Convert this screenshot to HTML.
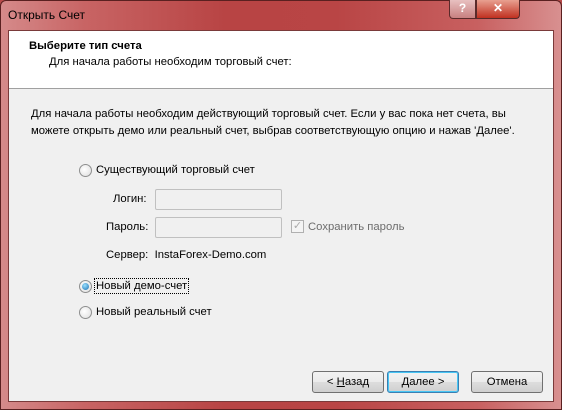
<!DOCTYPE html>
<html><head><meta charset="utf-8"><style>
*{margin:0;padding:0;box-sizing:border-box}
body{width:562px;height:410px;overflow:hidden;font-family:"Liberation Sans",sans-serif;font-size:11.3px;color:#000;background:#b84a4a}
.frame{position:absolute;left:0;top:0;width:562px;height:410px;border:1px solid #5a2020;border-radius:6px 6px 0 0;background:linear-gradient(90deg,#d58a8a 0%,#c86464 15%,#b84444 40%,#b94545 60%,#c86060 85%,#d89090 100%)}
.title{position:absolute;left:8px;top:8px;font-size:12px;color:#000}
.client{position:absolute;left:8px;top:30px;width:546px;height:372px;background:#f0f0f0;border:1px solid #7a3a3a}
.head{position:absolute;left:0;top:0;width:100%;height:58px;background:#fff;border-bottom:1px solid #a0a0a0}
.abs{position:absolute;white-space:nowrap}
.radio{position:absolute;width:13px;height:13px;border-radius:50%;border:1px solid #8e8f8f;background:radial-gradient(circle at 40% 40%,#fff,#ddd)}
.radio.on::after{content:"";position:absolute;left:2px;top:2px;width:7px;height:7px;border-radius:50%;background:radial-gradient(circle at 40% 35%,#9be0ff,#1a6fb0)}
.inp{position:absolute;width:127px;height:21px;border:1px solid #c0c0c0;border-radius:2px;background:#f0f0f0}
.btn{position:absolute;top:340px;width:72px;height:22px;border:1px solid #707070;border-radius:3px;background:linear-gradient(#f2f2f2 0%,#ebebeb 50%,#dddddd 51%,#cfcfcf 100%);text-align:center;line-height:20px}
.btn.def{border-color:#3c7fb1;box-shadow:inset 0 0 0 1px #48c6f4}
.tb{position:absolute;top:0;height:19px;border:1px solid #5a2a2a;border-top:none}
</style></head><body>
<div class="frame"></div>
<div class="title">Открыть Счет</div>
<div class="tb" style="left:449px;width:27px;border-radius:0 0 0 4px;background:linear-gradient(#e8c0c0,#c88080);text-align:center;color:#fff;font-weight:bold;font-size:12px;line-height:17px">?</div>
<div class="tb" style="left:476px;width:44px;border-radius:0 0 4px 0;background:linear-gradient(#e8a090,#c03020);text-align:center;color:#fff;font-weight:bold;font-size:12px;line-height:17px">✕</div>
<div class="client">
 <div class="head">
  <div class="abs" style="left:20px;top:9px;font-weight:bold">Выберите тип счета</div>
  <div class="abs" style="left:40px;top:25px">Для начала работы необходим торговый счет:</div>
 </div>
 <div class="abs" style="left:22px;top:75px;line-height:17px">Для начала работы необходим действующий торговый счет. Если у вас пока нет счета, вы<br>можете открыть демо или реальный счет, выбрав соответствующую опцию и нажав 'Далее'.</div>
 <div class="radio" style="left:70px;top:133px"></div>
 <div class="abs" style="left:87px;top:133px">Существующий торговый счет</div>
 <div class="abs" style="left:104px;top:162px">Логин:</div>
 <div class="inp" style="left:146px;top:158px"></div>
 <div class="abs" style="left:97px;top:190px">Пароль:</div>
 <div class="inp" style="left:146px;top:186px"></div>
 <div class="abs" style="left:282px;top:189px;width:13px;height:13px;border:1px solid #b0b0b0;background:#f4f4f4;color:#aaa;font-size:11px;line-height:11px;text-align:center">✓</div>
 <div class="abs" style="left:299px;top:190px;color:#6d6d6d">Сохранить пароль</div>
 <div class="abs" style="left:97px;top:218px">Сервер:&nbsp; InstaForex-Demo.com</div>
 <div class="radio on" style="left:70px;top:249px"></div>
 <div class="abs" style="left:85px;top:247px;border:1px dotted #000;padding:1px 1px">Новый демо-счет</div>
 <div class="radio" style="left:70px;top:275px"></div>
 <div class="abs" style="left:87px;top:275px">Новый реальный счет</div>
 <div class="btn" style="left:303px">&lt; <u>Н</u>азад</div>
 <div class="btn def" style="left:378px"><u>Д</u>алее &gt;</div>
 <div class="btn" style="left:462px">Отмена</div>
</div>
</body></html>
